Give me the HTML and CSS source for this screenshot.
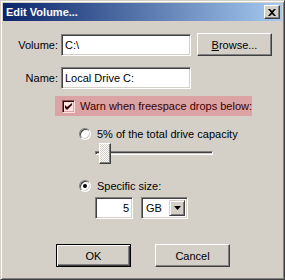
FILE: index.html
```html
<!DOCTYPE html>
<html lang="en">
<head>
  <meta charset="UTF-8">
  <title>Edit Volume...</title>
  <link rel="stylesheet" href="styles.css">
</head>
<body>
  <div class="window">
    <div class="titlebar">
      <span class="title">Edit Volume...</span>
      <span class="close">
        <svg width="8" height="7" viewBox="0 0 8 7"><path d="M0 0h2l2 2 2-2h2L5 3.5 8 7H6L4 5 2 7H0l3-3.5z" fill="#000"/></svg>
      </span>
    </div>

    <div class="body">
      <div class="row row-volume">
        <span class="lbl">Volume:</span>
        <div class="field path">C:\</div>
        <span class="btn browse"><u>B</u>rowse...</span>
      </div>

      <div class="row row-name">
        <span class="lbl">Name:</span>
        <div class="field path">Local Drive C:</div>
      </div>

      <!-- highlighted option -->
      <div class="warn">
        <span class="check">
          <svg width="7" height="7" viewBox="0 0 7 7"><path d="M0 2v3l2 2 5-5V-0L2 4z" fill="#3a0000"/></svg>
        </span>
        <span>Warn when freespace drops below:</span>
      </div>

      <div class="option opt-percent">
        <span class="radio"></span>
        <span>5% of the total drive capacity</span>
      </div>

      <div class="slider">
        <div class="track"></div>
        <div class="thumb"></div>
      </div>

      <div class="option opt-size">
        <span class="radio checked"></span>
        <span>Specific size:</span>
      </div>

      <div class="size-row">
        <div class="field size">5</div>
        <div class="combo">
          <span class="combo-text">GB</span>
          <span class="drop">
            <svg width="7" height="4" viewBox="0 0 7 4"><path d="M0 0h7L3.5 4z" fill="#000"/></svg>
          </span>
        </div>
      </div>

      <div class="actions">
        <span class="btn default">OK</span>
        <span class="btn">Cancel</span>
      </div>
    </div>
  </div>
</body>
</html>
```

FILE: styles.css
```css
body {
  margin: 0;
  font-family: "Liberation Sans", Arial, sans-serif;
  font-size: 11px;
  color: #000;
}
.window {
  width: 285px;
  height: 280px;
  box-sizing: border-box;
  background: #d4d0c8;
  border: 1px solid;
  border-color: #d4d0c8 #404040 #404040 #d4d0c8;
  box-shadow: inset 1px 1px #fff, inset -1px -1px #808080;
  padding: 2px;
}
.titlebar {
  height: 18px;
  display: flex;
  align-items: center;
  justify-content: space-between;
  padding: 0 2px 0 3px;
  background: linear-gradient(to right, #0a246a, #a6caf0);
}
.title {
  color: #fff;
  font-weight: bold;
  font-size: 11px;
}
.close {
  width: 16px;
  height: 14px;
  box-sizing: border-box;
  display: flex;
  align-items: center;
  justify-content: center;
  background: #d4d0c8;
  border: 1px solid;
  border-color: #fff #404040 #404040 #fff;
  box-shadow: inset -1px -1px #808080;
}
.body {
  display: flex;
  flex-direction: column;
  align-items: flex-start;
}
.row {
  display: flex;
  align-items: center;
}
.row-volume {
  margin-top: 12px;
}
.row-name {
  margin-top: 11px;
}
.lbl {
  width: 55px;
  margin-right: 3px;
  text-align: right;
}
.field {
  height: 22px;
  box-sizing: border-box;
  background: #fff;
  border: 1px solid;
  border-color: #808080 #fff #fff #808080;
  box-shadow: inset 1px 1px #404040, inset -1px -1px #d4d0c8;
  line-height: 20px;
  padding: 0 3px;
  white-space: nowrap;
}
.path {
  width: 130px;
}
.btn {
  width: 75px;
  height: 23px;
  box-sizing: border-box;
  display: flex;
  align-items: center;
  justify-content: center;
  background: #d4d0c8;
  border: 1px solid;
  border-color: #fff #404040 #404040 #fff;
  box-shadow: inset -1px -1px #808080;
}
.browse {
  margin-left: 6px;
}
.btn.default {
  border-color: #000;
  box-shadow: inset 1px 1px #fff, inset -1px -1px #404040, inset -2px -2px #808080;
}
.warn {
  margin-top: 7px;
  margin-left: 52px;
  width: 197px;
  height: 20px;
  box-sizing: border-box;
  padding-left: 7px;
  display: flex;
  align-items: center;
  gap: 5px;
  background: #dba3a3;
  color: #3a0000;
}
.check {
  width: 13px;
  height: 13px;
  box-sizing: border-box;
  display: flex;
  align-items: center;
  justify-content: center;
  background: #ffe2e2;
  border: 1px solid;
  border-color: #8a5a5a #ffe2e2 #ffe2e2 #8a5a5a;
  box-shadow: inset 1px 1px #3a0000, inset -1px -1px #dba3a3;
}
.option {
  height: 13px;
  margin-left: 76px;
  display: flex;
  align-items: center;
  gap: 6px;
}
.opt-percent {
  margin-top: 11px;
}
.opt-size {
  margin-top: 15px;
}
.radio {
  width: 12px;
  height: 12px;
  box-sizing: border-box;
  border-radius: 50%;
  background: #fff;
  border: 1px solid;
  border-color: #808080 #fff #fff #808080;
  box-shadow: inset 1px 1px #404040, inset -1px -1px #d4d0c8;
  display: flex;
  align-items: center;
  justify-content: center;
}
.radio.checked::after {
  content: "";
  width: 4px;
  height: 4px;
  border-radius: 50%;
  background: #000;
}
.slider {
  position: relative;
  margin-top: 3px;
  margin-left: 92px;
  width: 118px;
  height: 21px;
}
.track {
  margin-top: 8px;
  height: 4px;
  box-sizing: border-box;
  border: 1px solid;
  border-color: #808080 #fff #fff #808080;
  box-shadow: inset 1px 1px #404040;
  background: #d4d0c8;
}
.thumb {
  position: absolute;
  left: 4px;
  top: 0;
  width: 12px;
  height: 21px;
  box-sizing: border-box;
  border: 1px solid;
  border-color: #fff #404040 #404040 #fff;
  box-shadow: inset -1px -1px #808080;
  background: repeating-conic-gradient(#fff 0 25%, #d4d0c8 0 50%) 0 0 / 2px 2px;
}
.size-row {
  margin-top: 5px;
  margin-left: 92px;
  display: flex;
  gap: 8px;
}
.size {
  width: 38px;
  text-align: right;
}
.combo {
  width: 47px;
  height: 22px;
  box-sizing: border-box;
  background: #fff;
  border: 1px solid;
  border-color: #808080 #fff #fff #808080;
  box-shadow: inset 1px 1px #404040, inset -1px -1px #d4d0c8;
  padding: 2px;
  display: flex;
  justify-content: space-between;
}
.combo-text {
  line-height: 16px;
  padding-left: 2px;
}
.drop {
  width: 16px;
  height: 16px;
  box-sizing: border-box;
  display: flex;
  align-items: center;
  justify-content: center;
  background: #d4d0c8;
  border: 1px solid;
  border-color: #d4d0c8 #404040 #404040 #d4d0c8;
  box-shadow: inset 1px 1px #fff, inset -1px -1px #808080;
}
.actions {
  margin-top: 25px;
  margin-left: 53px;
  display: flex;
  gap: 24px;
}
```
